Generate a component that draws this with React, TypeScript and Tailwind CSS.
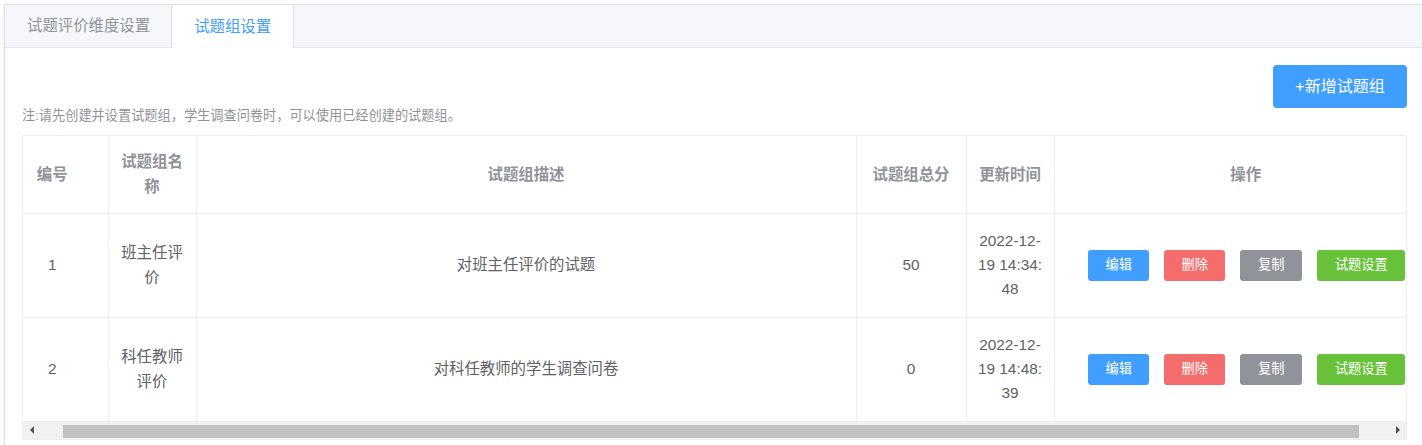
import React from "react";

const cols = [111, 88, 660, 110, 88, 383];

type Row = {
	id: string;
	name: string[];
	desc: string;
	score: string;
	time: string[];
};

const rows: Row[] = [
	{
		id: "1",
		name: ["班主任评", "价"],
		desc: "对班主任评价的试题",
		score: "50",
		time: ["2022-12-", "19 14:34:", "48"],
	},
	{
		id: "2",
		name: ["科任教师", "评价"],
		desc: "对科任教师的学生调查问卷",
		score: "0",
		time: ["2022-12-", "19 14:48:", "39"],
	},
];

function Lines({ items }: { items: string[] }) {
	return (
		<>
			{items.map((t, i) => (
				<div key={i}>{t}</div>
			))}
		</>
	);
}

function Actions() {
	return (
		<div className="flex items-center justify-center gap-[15px] pl-[2px] text-[13.2px] text-white">
			<button className="w-[61px] h-[31px] rounded-[3px] bg-[#409eff]">编辑</button>
			<button className="w-[61px] h-[31px] rounded-[3px] bg-[#f56c6c]">删除</button>
			<button className="w-[62px] h-[31px] rounded-[3px] bg-[#909399]">复制</button>
			<button className="w-[88px] h-[31px] rounded-[3px] bg-[#67c23a]">试题设置</button>
		</div>
	);
}

export default function App() {
	return (
		<div
			className="w-screen h-screen overflow-hidden bg-white"
			style={{ fontFamily: '"Liberation Sans", "Noto Sans CJK SC", sans-serif' }}
		>
			<div className="ml-[4px] mt-[4px] w-[1421px] border border-[#dcdfe6] bg-white shadow-[0_2px_4px_rgba(0,0,0,0.08)]">
				{/* tabs */}
				<div className="flex h-[43px] bg-[#f5f7fa] border-b border-[#e4e7ed]">
					<div className="pl-[22px] pr-[21px] flex items-center text-[15.4px] text-[#909399]">
						试题评价维度设置
					</div>
					<div className="px-[22px] flex items-center text-[15.4px] text-[#409eff] bg-white border-x border-[#dcdfe6] -mb-px">
						试题组设置
					</div>
				</div>

				<div className="px-[17px] pt-[17px] pb-[17px]">
					<div className="flex justify-end">
						<button className="w-[134px] h-[43px] rounded-[4px] bg-[#409eff] text-white text-[16px]">
							+新增试题组
						</button>
					</div>
					<p className="text-[13.2px] leading-[16px] text-[#909399]">
						注:请先创建并设置试题组，学生调查问卷时，可以使用已经创建的试题组。
					</p>

					{/* table */}
					<div className="mt-[11px] w-[1385px] border border-[#ebeef5] overflow-hidden">
						<div className="overflow-hidden">
							<table
								className="table-fixed border-collapse -ml-[26px] text-[15.4px] text-[#606266]"
								style={{ width: cols.reduce((a, b) => a + b, 0) }}
							>
								<colgroup>
									{cols.map((w, i) => (
										<col key={i} style={{ width: w }} />
									))}
								</colgroup>
								<thead>
									<tr className="h-[77px] text-[#909399] font-bold leading-[25px]">
										<th className="border-r border-b border-[#ebeef5] px-[10px]">编号</th>
										<th className="border-r border-b border-[#ebeef5] px-[10px]">
											<Lines items={["试题组名", "称"]} />
										</th>
										<th className="border-r border-b border-[#ebeef5] px-[10px]">试题组描述</th>
										<th className="border-r border-b border-[#ebeef5] px-[10px]">试题组总分</th>
										<th className="border-r border-b border-[#ebeef5] px-[10px]">更新时间</th>
										<th className="border-b border-[#ebeef5] px-[10px]">操作</th>
									</tr>
								</thead>
								<tbody>
									{rows.map((r) => (
										<tr key={r.id} className="h-[104px] text-center leading-[24px]">
											<td className="border-r border-b border-[#ebeef5] px-[10px]">{r.id}</td>
											<td className="border-r border-b border-[#ebeef5] px-[10px] leading-[25px]">
												<Lines items={r.name} />
											</td>
											<td className="border-r border-b border-[#ebeef5] px-[10px]">{r.desc}</td>
											<td className="border-r border-b border-[#ebeef5] px-[10px]">{r.score}</td>
											<td className="border-r border-b border-[#ebeef5] px-[10px]">
												<Lines items={r.time} />
											</td>
											<td className="border-b border-[#ebeef5] px-[10px]">
												<Actions />
											</td>
										</tr>
									))}
								</tbody>
							</table>
						</div>

						{/* horizontal scrollbar */}
						<div className="flex h-[17px] bg-[#f1f1f1]">
							<div className="w-[17px] flex items-center justify-center">
								<div className="w-0 h-0 border-y-[4px] border-y-transparent border-r-[4px] border-r-[#505050]" />
							</div>
							<div className="flex-1 flex items-center">
								<div className="ml-[23px] mr-[30px] flex-1 h-[13px] mt-[2px] bg-[#c1c1c1]" />
							</div>
							<div className="w-[17px] flex items-center justify-center">
								<div className="w-0 h-0 border-y-[4px] border-y-transparent border-l-[4px] border-l-[#505050]" />
							</div>
						</div>
					</div>
				</div>
			</div>
		</div>
	);
}
